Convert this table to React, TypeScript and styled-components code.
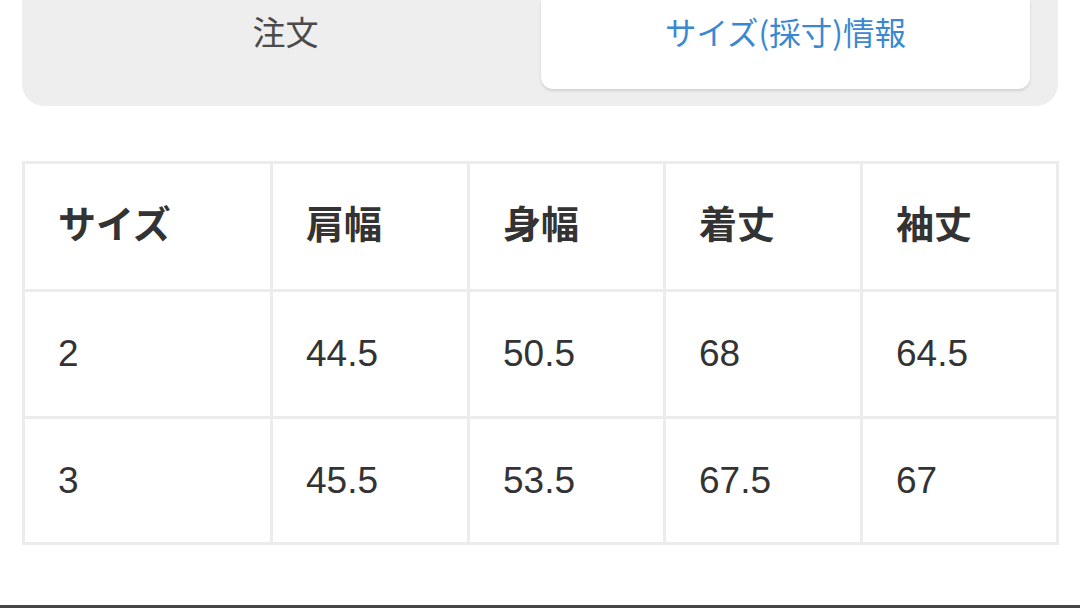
import React from "react";
import styled, { createGlobalStyle } from "styled-components";

const Global = createGlobalStyle`
  html, body { margin: 0; padding: 0; background: #ffffff; }
  body { width: 1080px; height: 608px; overflow: hidden; font-family: "Liberation Sans", "Noto Sans CJK JP", sans-serif; }
`;

const Page = styled.div`
  width: 1080px;
  height: 608px;
  display: flex;
  flex-direction: column;
  box-sizing: border-box;
`;

const TabBar = styled.div`
  margin: 0 22px;
  height: 106px;
  box-sizing: border-box;
  background: #eeeeee;
  border-radius: 0 0 22px 22px;
  padding: 0 28px 17px 8px;
  display: grid;
  grid-template-columns: 1fr 489px;
`;

const Tab = styled.div<{ $active?: boolean }>`
  display: flex;
  justify-content: center;
  align-items: flex-start;
  padding-top: 10px;
  font-family: "Noto Sans CJK JP", sans-serif;
  font-size: ${(p) => (p.$active ? "31.5px" : "33px")};
  line-height: 42px;
  color: ${(p) => (p.$active ? "#3a88d2" : "#4a4a4a")};
  background: ${(p) => (p.$active ? "#ffffff" : "transparent")};
  border-radius: 0 0 12px 12px;
  box-shadow: ${(p) => (p.$active ? "0 2px 3px rgba(0,0,0,0.12)" : "none")};
`;

const TableWrap = styled.div`
  margin: 55px 22px 0 22px;
`;

const Table = styled.table`
  width: 1034px;
  border-collapse: collapse;
  table-layout: fixed;
  border: 3px solid #ececec;
`;

const Col = styled.col<{ $w: number }>`
  width: ${(p) => p.$w}px;
`;

const Row = styled.tr<{ $h: number }>`
  height: ${(p) => p.$h}px;
`;

const Head = styled.th`
  border: 3px solid #ececec;
  text-align: left;
  padding: 0 0 10px 33px;
  font-family: "Noto Sans CJK JP", sans-serif;
  font-weight: 700;
  font-size: 38px;
  color: #333333;
`;

const Cell = styled.td`
  border: 3px solid #ececec;
  padding: 0 0 0 33px;
  font-family: "Liberation Sans", sans-serif;
  font-size: 37px;
  color: #333333;
`;

const Footer = styled.div`
  margin-top: auto;
  height: 3px;
  background: #464646;
`;

const headers = ["サイズ", "肩幅", "身幅", "着丈", "袖丈"];
const rows = [
  ["2", "44.5", "50.5", "68", "64.5"],
  ["3", "45.5", "53.5", "67.5", "67"],
];
const widths = [248, 197, 196, 197, 196];

export default function App() {
  return (
    <>
      <Global />
      <Page>
        <TabBar>
          <Tab>注文</Tab>
          <Tab $active>サイズ(採寸)情報</Tab>
        </TabBar>
        <TableWrap>
          <Table>
            <colgroup>
              {widths.map((w, i) => (
                <Col key={i} $w={w} />
              ))}
            </colgroup>
            <thead>
              <Row $h={128}>
                {headers.map((h) => (
                  <Head key={h}>{h}</Head>
                ))}
              </Row>
            </thead>
            <tbody>
              {rows.map((r, i) => (
                <Row key={i} $h={i === 0 ? 127 : 126}>
                  {r.map((c, j) => (
                    <Cell key={j}>{c}</Cell>
                  ))}
                </Row>
              ))}
            </tbody>
          </Table>
        </TableWrap>
        <Footer />
      </Page>
    </>
  );
}
